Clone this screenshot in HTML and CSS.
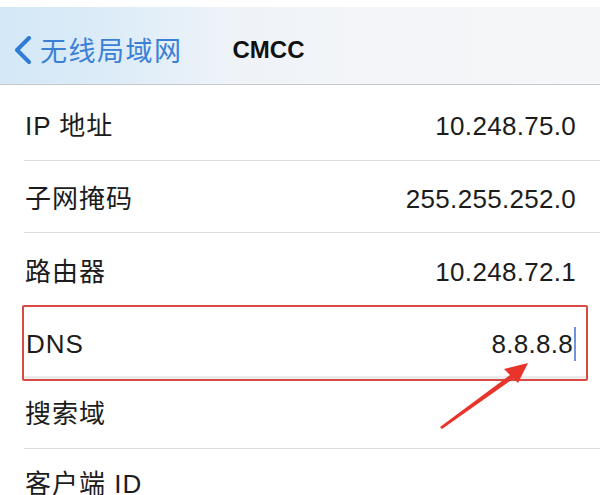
FILE: index.html
```html
<!DOCTYPE html>
<html lang="zh-CN">
<head>
<meta charset="utf-8">
<title>CMCC</title>
<link rel="stylesheet" href="styles.css">
</head>
<body>
<div class="status"></div>
<header class="nav">
  <a class="back" href="#">
    <svg class="chevron" width="22" height="28" viewBox="0 0 22 28"><path d="M17 2 L5 14 L17 26" fill="none" stroke="#2f7bd8" stroke-width="4" stroke-linecap="round" stroke-linejoin="round"/></svg>
    <span class="back-text">无线局域网</span>
  </a>
  <h1 class="title">CMCC</h1>
</header>
<main class="list">
  <div class="row r1"><span class="label">IP 地址</span><span class="value">10.248.75.0</span></div>
  <div class="row r2"><span class="label">子网掩码</span><span class="value">255.255.252.0</span></div>
  <div class="row r3 no-line"><span class="label">路由器</span><span class="value">10.248.72.1</span></div>
  <div class="row highlight"><span class="label">DNS</span><span class="value">8.8.8.8<span class="caret"></span></span></div>
  <div class="row r5"><span class="label">搜索域</span><span class="value"></span></div>
  <div class="row r6 no-line"><span class="label">客户端 ID</span><span class="value"></span></div>
</main>
<svg class="arrow" width="600" height="495" viewBox="0 0 600 495">
  <path d="M440 427 L514 372 L517 376 L442 429 Z" fill="#e8342a"/>
  <path d="M528 363 L504 369 L518 383 Z" fill="#e8342a"/>
</svg>
</body>
</html>
```
FILE: styles.css
```css
html, body {
  margin: 0;
  padding: 0;
  background: #ffffff;
  width: 600px;
  height: 495px;
  overflow: hidden;
  font-family: "Liberation Sans", "Noto Sans CJK SC", sans-serif;
  color: #1c1c1c;
  position: relative;
}

.status {
  height: 7px;
  background: #ffffff;
}

.nav {
  height: 78px;
  border-bottom: 1px solid #c6c8ca;
  display: flex;
  align-items: center;
  padding: 8px 0 0 12px;
  box-sizing: border-box;
  background: linear-gradient(90deg, #d4e8f7 0%, #dcecf8 18%, #eef3f8 38%, #f3f5f8 60%, #f4f6f8 100%);
}

.back {
  display: flex;
  align-items: center;
  text-decoration: none;
  color: #3a80d6;
}

.chevron {
  display: block;
}

.back-text {
  font-size: 27px;
  line-height: 1;
  margin-left: 6px;
  letter-spacing: 1.5px;
  font-family: "Noto Sans CJK SC", sans-serif;
}

.title {
  margin: 0 0 0 50px;
  font-size: 24px;
  font-weight: bold;
  line-height: 1;
  color: #111;
}

.list {
  display: flex;
  flex-direction: column;
}

.row {
  display: flex;
  align-items: center;
  justify-content: space-between;
  margin-left: 24px;
  padding: 5px 24px 0 1px;
  height: 72px;
  box-sizing: border-box;
  border-bottom: 1px solid #dcdcdc;
  font-size: 26px;
  line-height: 1;
}

.row.no-line {
  border-bottom: none;
}

.r1 { height: 76px; padding-top: 7px; }
.r2 { height: 72px; }
.r3 { height: 72px; }
.r5 { height: 68px; padding-top: 0; padding-bottom: 2px; }
.r6 { height: 46px; align-items: flex-start; padding-top: 22px; }

.label {
  letter-spacing: 1px;
}

.value {
  display: flex;
  align-items: center;
  letter-spacing: 0.3px;
}

.row.highlight {
  margin-left: 22px;
  margin-right: 12px;
  padding: 2px 10px 0 2px;
  height: 76px;
  border: 2px solid #d94a42;
  border-radius: 2px;
  box-shadow: inset 0 -3px 0 #ececec;
}

.caret {
  display: inline-block;
  width: 2px;
  height: 34px;
  background: #7093e0;
  margin-left: 1px;
}

.arrow {
  position: absolute;
  left: 0;
  top: 0;
  pointer-events: none;
}
```
